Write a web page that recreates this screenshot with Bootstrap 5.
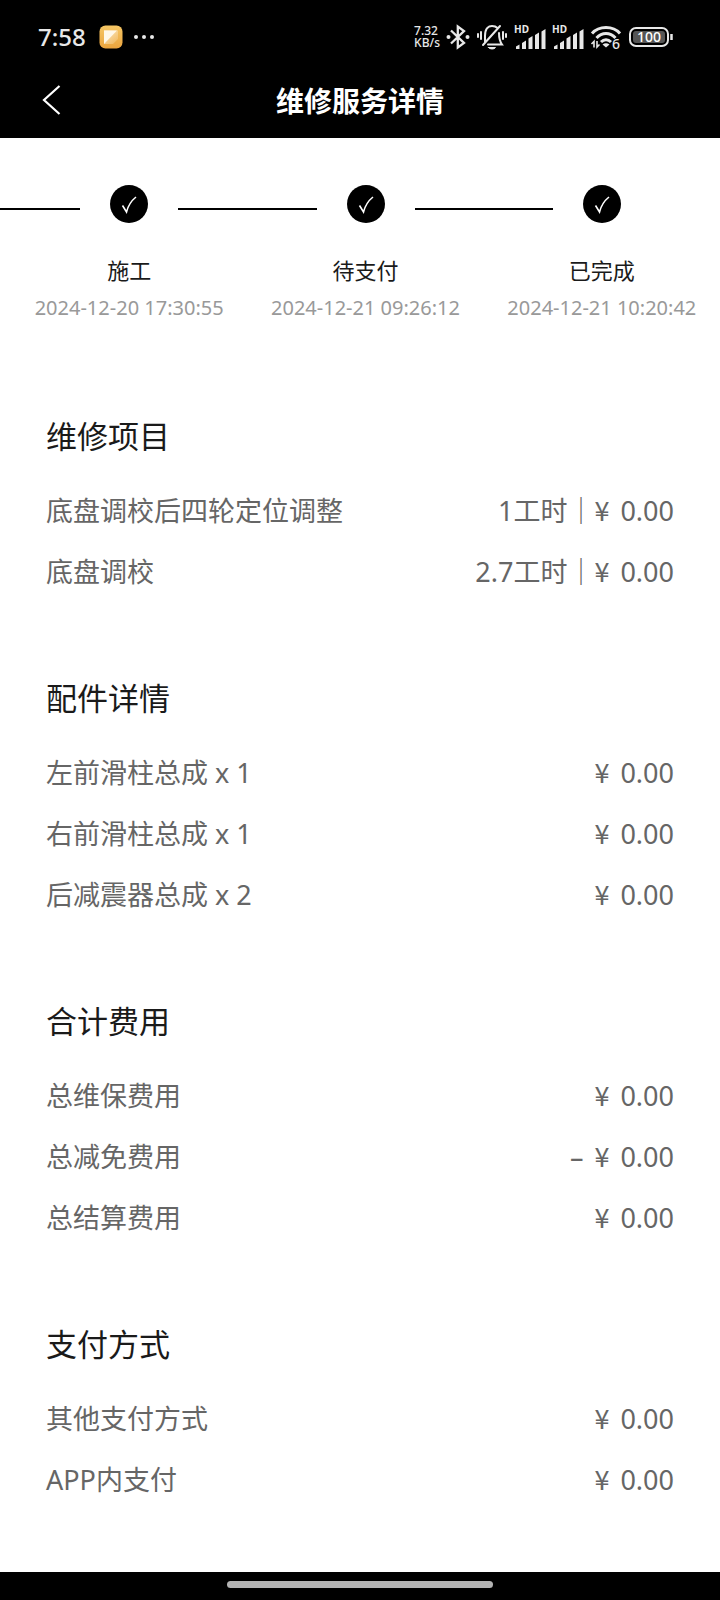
<!DOCTYPE html>
<html lang="zh-CN">
<head>
<meta charset="utf-8">
<meta name="viewport" content="width=device-width, initial-scale=1">
<title>维修服务详情</title>
<link href="https://cdn.jsdelivr.net/npm/bootstrap@5.3.0/dist/css/bootstrap.min.css" rel="stylesheet">
<style>
  body { font-family: "Noto Sans", "Noto Sans CJK SC", sans-serif; color: #1a1a1a; background: #fff; }
  svg { display: block; flex: none; }
  .status-bar { height: 74px; padding: 0 46px 0 38px; color: #e8e8e8; }
  .status-left { gap: 9px; }
  .clock { font-size: 24px; line-height: 28px; font-weight: 500; margin-right: 4px; }
  .net-speed { font-size: 12px; }
  .net-speed span { display: block; line-height: 12px; font-weight: 500; }
  .status-icons { gap: 6px; }
  .title-bar { display: grid; grid-template-columns: 1fr auto 1fr; height: 64px; padding: 0 36px 12px; }
  .title-bar h1 { font-size: 28px; line-height: 40px; font-weight: 700; font-family: "Noto Sans CJK SC", sans-serif; }
  .back-btn { color: #fff; padding: 5px; }
  .steps { padding-top: 47px; margin-bottom: 94px; }
  .step-lead { width: 11px; }
  .step-rail { gap: 30px; height: 71px; }
  .step-line { height: 2px; margin-top: 23px; background: #000; }
  .step-dot { width: 38px; height: 38px; flex: none; }
  .step-name { font-size: 22px; line-height: 28px; }
  .step-time { font-size: 20px; line-height: 28px; margin-top: 10px; color: #999; white-space: nowrap; }
  .bill { padding: 0 46px; }
  .bill section + section { margin-top: 76px; }
  .bill h2 { font-size: 31px; line-height: 40px; font-weight: 400; margin-bottom: 24px; }
  .bill li { font-size: 27px; line-height: 61px; color: #666; }
  .yen { font-family: "Noto Sans CJK SC", sans-serif; line-height: 1; margin-right: 4px; }
  .minus { margin-right: 4px; }
  .gesture-bar { height: 28px; padding-bottom: 3px; }
  .gesture-pill { width: 37%; height: 7px; background: #b3b3b3; }
</style>
</head>
<body>
<div class="d-flex flex-column min-vh-100">
  <header class="bg-black text-white">
    <div class="status-bar d-flex align-items-center justify-content-between">
      <div class="status-left d-flex align-items-center">
        <span class="clock">7:58</span>
        <svg width="24" height="24" viewBox="0 0 24 24" aria-hidden="true">
          <defs><linearGradient id="note" x1="0" y1="0" x2="0" y2="1"><stop offset="0" stop-color="#f6c765"/><stop offset="1" stop-color="#eba43e"/></linearGradient>
          <linearGradient id="fold" x1="0" y1="0" x2="1" y2="1"><stop offset="0" stop-color="#fff"/><stop offset="1" stop-color="#f3bd62"/></linearGradient></defs>
          <rect x="0.5" y="0.5" width="23" height="23" rx="6" fill="url(#note)"/>
          <path d="M5 5.500H19V14L14 19H5Z" fill="url(#fold)" opacity=".65"/><path d="M5 5.500H18L5 19Z" fill="#fff8e8"/>
        </svg>
        <svg width="24" height="24" viewBox="0 0 24 24" fill="#e8e8e8" aria-hidden="true"><circle cx="4" cy="12" r="2"/><circle cx="12" cy="12" r="2"/><circle cx="20" cy="12" r="2"/></svg>
      </div>
      <div class="status-icons d-flex align-items-center">
        <div class="net-speed"><span>7.32</span><span>KB/s</span></div>
        <svg width="24" height="26" viewBox="0 0 24 26" fill="none" stroke="#e8e8e8" stroke-width="2.300" aria-hidden="true"><path d="M5 6.500 18 19 11.800 23.500V2.500L18 7 5 19.500"/><circle cx="2.500" cy="13" r="2" fill="#e8e8e8" stroke="none"/><circle cx="21.500" cy="13" r="2" fill="#e8e8e8" stroke="none"/></svg>
        <svg width="32" height="28" viewBox="0 0 32 28" fill="none" stroke="#e8e8e8" stroke-width="2" stroke-linecap="round" aria-hidden="true"><path d="M9 19V13C9 5 13 3 16 3C18.500 3 20.500 4 21.500 5M23 10C23 14 23.500 18 26 21.500H12M24 3 7 22"/><path d="M12.500 24.500h7c-1 2-6 2-7 0Z" fill="#e8e8e8" stroke-width="1"/><path d="M5 9v7M2 11v3M27 9v7M30 11v3"/></svg>
        <svg width="32" height="30" viewBox="0 -3 32 30" fill="#e8e8e8" aria-hidden="true"><text x="0" y="8" font-size="10" font-weight="700">HD</text><path d="M2 24v-2.500l3.500-2V24ZM8 24v-6l4-2.500V24ZM14.500 24V13.500l4-2.500V24ZM21 24V10l4-2.500V24ZM27.500 24V6.500L31.500 4V24Z"/></svg>
        <svg width="32" height="30" viewBox="0 -3 32 30" fill="#e8e8e8" aria-hidden="true"><text x="0" y="8" font-size="10" font-weight="700">HD</text><path d="M2 24v-2.500l3.500-2V24ZM8 24v-6l4-2.500V24ZM14.500 24V13.500l4-2.500V24ZM21 24V10l4-2.500V24ZM27.500 24V6.500L31.500 4V24Z"/></svg>
        <svg width="32" height="34" viewBox="0 -3 32 34" fill="none" stroke="#e8e8e8" stroke-width="3" aria-hidden="true"><path d="M2 10.500C9 2.500 23 2.500 30 10.500M6.500 15C12 9 20 9 25.500 15M11 19c3-3 7-3 10 0"/><path d="M12.500 21.500q3.500-2.500 7 0L16 24.500Z" fill="#e8e8e8" stroke="none"/><path d="M4 24.500v-6l-2.500 2.500M7 18v6l2.500-2.500" stroke-width="1.600"/><text x="22" y="26" font-size="14" font-weight="500" fill="#e8e8e8" stroke="none">6</text></svg>
        <svg width="46" height="22" viewBox="0 0 46 22" fill="none" aria-hidden="true"><rect x="2" y="2" width="38" height="18" rx="6" stroke="#e8e8e8" stroke-width="2"/><rect x="5" y="5" width="32" height="12" rx="3" fill="#555"/><path d="M43.500 8v6" stroke="#e8e8e8" stroke-width="2.500"/><text x="21" y="16" font-size="14" font-weight="500" text-anchor="middle" fill="#fff">100</text></svg>
      </div>
    </div>
    <div class="title-bar align-items-center">
      <button type="button" class="btn back-btn border-0 me-auto" aria-label="返回">
        <svg width="20" height="30" viewBox="0 0 20 30" fill="none" stroke="currentColor" stroke-width="2.200" aria-hidden="true"><path d="M18.500 1 3 15 18.500 29"/></svg>
      </button>
      <h1 class="m-0">维修服务详情</h1>
    </div>
  </header>

  <main class="flex-grow-1">
    <div class="steps d-flex">
      <div class="step-lead"><div class="step-line"></div></div>
      <div class="flex-fill text-center w-25">
        <div class="step-rail d-flex align-items-start"><div class="step-line flex-fill"></div><svg class="step-dot" viewBox="0 0 38 38" aria-hidden="true"><circle cx="19" cy="19" r="19"/><path d="M12.500 20.500 16.500 27C18 21 21 16 26 12" fill="none" stroke="#fff" stroke-width="1.600"/></svg><div class="step-line flex-fill"></div></div>
        <div class="step-name">施工</div>
        <div class="step-time">2024-12-20 17:30:55</div>
      </div>
      <div class="flex-fill text-center w-25">
        <div class="step-rail d-flex align-items-start"><div class="step-line flex-fill"></div><svg class="step-dot" viewBox="0 0 38 38" aria-hidden="true"><circle cx="19" cy="19" r="19"/><path d="M12.500 20.500 16.500 27C18 21 21 16 26 12" fill="none" stroke="#fff" stroke-width="1.600"/></svg><div class="step-line flex-fill"></div></div>
        <div class="step-name">待支付</div>
        <div class="step-time">2024-12-21 09:26:12</div>
      </div>
      <div class="flex-fill text-center w-25">
        <div class="step-rail d-flex align-items-start"><div class="step-line flex-fill"></div><svg class="step-dot" viewBox="0 0 38 38" aria-hidden="true"><circle cx="19" cy="19" r="19"/><path d="M12.500 20.500 16.500 27C18 21 21 16 26 12" fill="none" stroke="#fff" stroke-width="1.600"/></svg><div class="step-line flex-fill invisible"></div></div>
        <div class="step-name">已完成</div>
        <div class="step-time">2024-12-21 10:20:42</div>
      </div>
    </div>

    <div class="bill">
      <section>
        <h2>维修项目</h2>
        <ul class="list-unstyled mb-0">
          <li class="d-flex justify-content-between"><span>底盘调校后四轮定位调整</span><span>1工时｜<span class="yen">¥</span> 0.00</span></li>
          <li class="d-flex justify-content-between"><span>底盘调校</span><span>2.7工时｜<span class="yen">¥</span> 0.00</span></li>
        </ul>
      </section>
      <section>
        <h2>配件详情</h2>
        <ul class="list-unstyled mb-0">
          <li class="d-flex justify-content-between"><span>左前滑柱总成 x 1</span><span><span class="yen">¥</span> 0.00</span></li>
          <li class="d-flex justify-content-between"><span>右前滑柱总成 x 1</span><span><span class="yen">¥</span> 0.00</span></li>
          <li class="d-flex justify-content-between"><span>后减震器总成 x 2</span><span><span class="yen">¥</span> 0.00</span></li>
        </ul>
      </section>
      <section>
        <h2>合计费用</h2>
        <ul class="list-unstyled mb-0">
          <li class="d-flex justify-content-between"><span>总维保费用</span><span><span class="yen">¥</span> 0.00</span></li>
          <li class="d-flex justify-content-between"><span>总减免费用</span><span><span class="minus">–</span> <span class="yen">¥</span> 0.00</span></li>
          <li class="d-flex justify-content-between"><span>总结算费用</span><span><span class="yen">¥</span> 0.00</span></li>
        </ul>
      </section>
      <section>
        <h2>支付方式</h2>
        <ul class="list-unstyled mb-0">
          <li class="d-flex justify-content-between"><span>其他支付方式</span><span><span class="yen">¥</span> 0.00</span></li>
          <li class="d-flex justify-content-between"><span>APP内支付</span><span><span class="yen">¥</span> 0.00</span></li>
        </ul>
      </section>
    </div>
  </main>

  <footer class="gesture-bar bg-black d-flex align-items-center justify-content-center"><div class="gesture-pill rounded-pill"></div></footer>
</div>
<script src="https://cdn.jsdelivr.net/npm/bootstrap@5.3.0/dist/js/bootstrap.bundle.min.js"></script>
</body>
</html>
